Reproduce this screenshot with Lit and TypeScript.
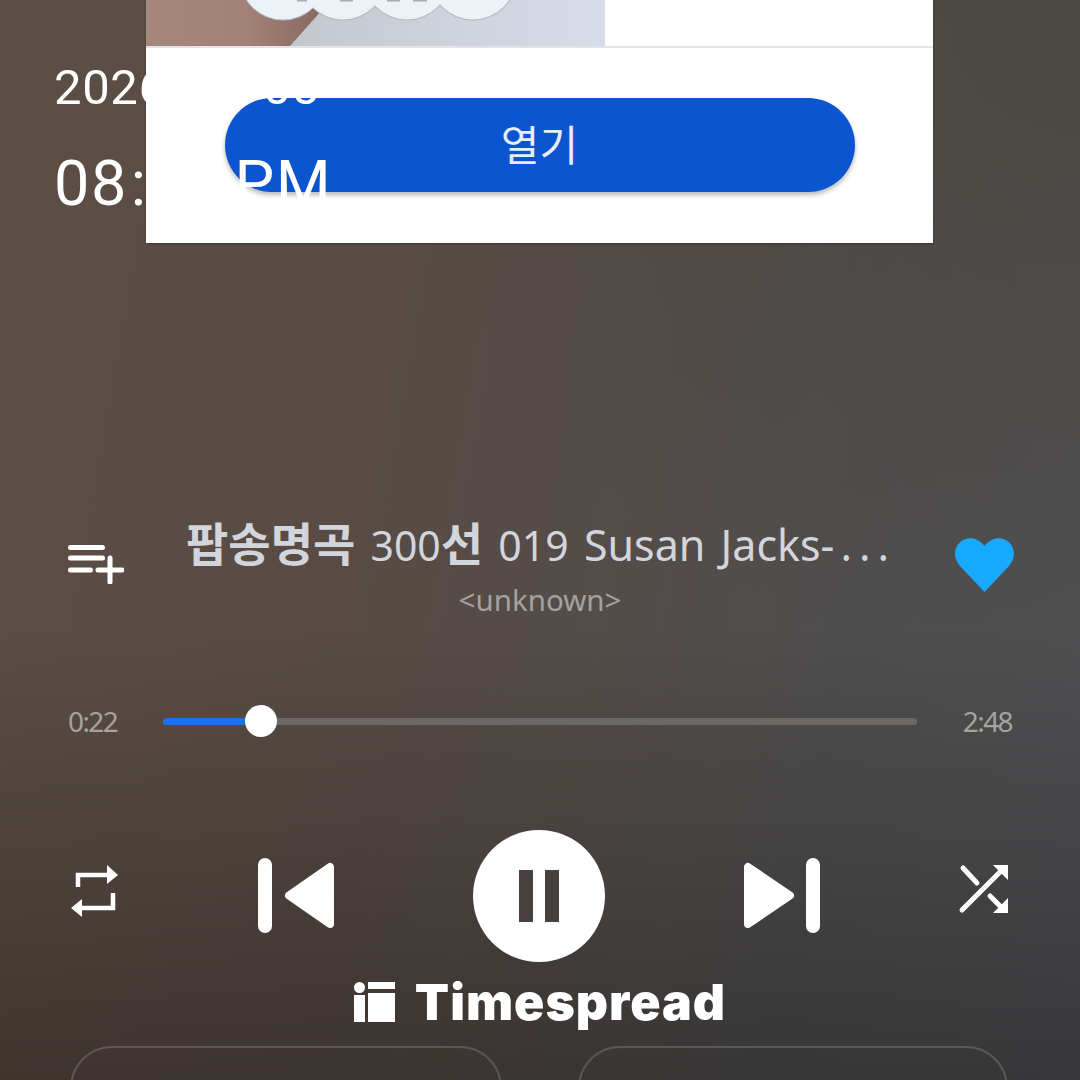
import { css, html, LitElement, svg } from "lit";
import { customElement } from "lit/decorators.js";

const BUMPS = [137, 197, 261, 327];
const MARKS = [
  [151, 10],
  [194, 13],
  [241, 13],
  [267, 14],
];
const PROGRESS = (98 / 754) * 100;

@customElement("ad-card")
export class AdCard extends LitElement {
  static styles = css`
    :host {
      position: absolute;
      top: 0;
      left: 146px;
      width: 787px;
      height: 243px;
      background: #fff;
      box-shadow: 0 1px 2px rgba(0, 0, 0, 0.3);
      display: flex;
      flex-direction: column;
      align-items: center;
    }
    .media {
      width: 100%;
      height: 46px;
      flex: none;
      border-bottom: 2px solid #e4e4e6;
    }
    .media svg {
      display: block;
    }
    .open {
      margin-top: 50px;
      width: 630px;
      height: 94px;
      border-radius: 47px;
      background: #0d55d0;
      box-shadow: 0 3px 5px rgba(0, 0, 0, 0.28);
      color: #e6edf9;
      font: 400 42px / 90px "Noto Sans CJK KR", "Noto Sans", sans-serif;
      text-align: center;
    }
  `;

  render() {
    return html`
      <div class="media">
        <svg width="787" height="46" viewBox="0 0 787 46">
          <defs>
            <linearGradient id="skin" x1="0" x2="1" y1="0" y2="0">
              <stop offset="0" stop-color="#a6877c" />
              <stop offset="0.55" stop-color="#a28277" />
              <stop offset="1" stop-color="#85665d" />
            </linearGradient>
            <linearGradient id="cloth" x1="0" x2="1" y1="0" y2="0">
              <stop offset="0" stop-color="#b4b5b9" />
              <stop offset="0.4" stop-color="#c6cad2" />
              <stop offset="1" stop-color="#d6dde9" />
            </linearGradient>
          </defs>
          <rect width="459" height="46" fill="url(#cloth)" />
          <polygon points="0,0 185,0 144,46 0,46" fill="url(#skin)" />
          ${BUMPS.map(
            (x) => svg`<circle cx=${x} cy="-23.500" r="44" fill="#b4b6b8" />`
          )}
          ${BUMPS.map(
            (x) => svg`<circle cx=${x} cy="-23.500" r="43" fill="#ebf3f9" />`
          )}
          ${MARKS.map(
            ([x, w]) => svg`<rect x=${x} y="0" width=${w} height="1.500" fill="#a9abad" />`
          )}
        </svg>
      </div>
      <div class="open">열기</div>
    `;
  }
}

@customElement("app-root")
export class AppRoot extends LitElement {
  static styles = css`
    :host {
      display: block;
      width: 1080px;
      height: 1080px;
    }
    .page {
      position: relative;
      width: 1080px;
      height: 1080px;
      overflow: hidden;
      display: flex;
      flex-direction: column;
      font-family: Roboto, "Noto Sans CJK KR", sans-serif;
      color: #fff;
      background: linear-gradient(
          180deg,
          rgba(0, 0, 0, 0) 0%,
          rgba(0, 0, 0, 0) 58%,
          rgba(0, 0, 0, 0.31) 100%
        ),
        radial-gradient(
          circle at 100% 0%,
          rgba(74, 68, 60, 0.75) 0%,
          rgba(74, 68, 60, 0) 45%
        ),
        linear-gradient(100deg, #5c4e44 0%, #574b45 40%, #4f4e4e 75%, #4f5053 100%);
    }
    .page > * {
      flex: none;
    }
    .clock {
      position: relative;
      z-index: 2;
      height: 232px;
      padding: 60px 0 0 54px;
      box-sizing: border-box;
    }
    .date {
      font-size: 49px;
      line-height: 56px;
      letter-spacing: 0.6px;
    }
    .date span {
      margin: 0 3px;
    }
    .time {
      margin-top: 32px;
      font-size: 63px;
      line-height: 72px;
      letter-spacing: 1.5px;
      word-spacing: -10px;
    }
    .time span {
      margin: 0 6px 0 3px;
    }
    .track {
      margin-top: 280px;
      display: grid;
      grid-template-columns: 68px 56px 62px 716px 53px 59px;
      grid-template-rows: 66px;
      align-items: center;
    }
    .queue {
      grid-column: 2;
      display: block;
      margin-top: 38px;
    }
    .title {
      grid-column: 4;
      margin-bottom: 5px;
      font-family: "Noto Sans", "Noto Sans CJK KR", sans-serif;
      font-weight: 400;
      font-size: 43px;
      line-height: 60px;
      color: #d2d5db;
      white-space: nowrap;
      word-spacing: 4px;
    }
    .title b {
      font-family: "Noto Sans CJK KR", sans-serif;
      font-weight: 700;
      font-size: 46px;
    }
    .title .num {
      font-size: 41px;
    }
    .title .more {
      letter-spacing: 7px;
      margin-left: 6px;
    }
    .heart {
      grid-column: 6;
      display: block;
      margin-top: 40px;
    }
    .artist {
      margin-top: 4px;
      text-align: center;
      font-family: "Noto Sans", sans-serif;
      font-weight: 400;
      font-size: 29.500px;
      line-height: 36px;
      color: #a5a19e;
    }
    .progress {
      margin-top: 83px;
      padding: 0 68px;
      display: flex;
      align-items: center;
      height: 40px;
      font-family: "Noto Sans", sans-serif;
      font-size: 28px;
      line-height: 38px;
      letter-spacing: -1.6px;
      color: #a6a29e;
    }
    .elapsed,
    .total {
      width: 95px;
      flex: none;
    }
    .total {
      text-align: right;
    }
    .bar {
      flex: 1;
      position: relative;
      height: 7px;
      border-radius: 4px;
      background: #6b6866;
    }
    .fill {
      height: 100%;
      border-radius: 4px;
      background: #1a73e4;
    }
    .thumb {
      position: absolute;
      top: 50%;
      width: 32px;
      height: 32px;
      border-radius: 50%;
      background: #fff;
      transform: translate(-50%, -50%);
    }
    .controls {
      margin-top: 89px;
      padding-left: 60px;
      display: grid;
      grid-template-columns: 198px 215px 271px 200px 70px;
      align-items: center;
      height: 132px;
    }
    .controls svg {
      display: block;
    }
    .pause {
      width: 132px;
      height: 132px;
      border-radius: 50%;
      background: #fff;
      display: flex;
      align-items: center;
      justify-content: center;
      gap: 12px;
    }
    .pause i {
      width: 14px;
      height: 52px;
      background: #46413f;
    }
    .brand {
      margin-top: 18px;
      display: flex;
      justify-content: center;
      align-items: flex-start;
      gap: 19px;
      height: 48px;
      font-family: Inter, sans-serif;
      font-weight: 900;
      font-size: 50px;
      line-height: 44px;
      letter-spacing: 1px;
    }
    .brand svg {
      display: block;
      flex: none;
      margin-top: 2px;
    }
    .actions {
      margin-top: 18px;
      padding: 0 72px 0 70px;
      display: grid;
      grid-template-columns: 432px 430px;
      justify-content: space-between;
    }
    .actions div {
      height: 80px;
      border: 2px solid rgba(255, 255, 255, 0.17);
      border-radius: 50px;
    }
  `;

  render() {
    return html`
      <div class="page">
        <ad-card></ad-card>
        <div class="clock">
          <div class="date">2026<span>-</span>01<span>-</span>05</div>
          <div class="time">08<span>:</span>30 PM</div>
        </div>

        <div class="track">
          <svg class="queue" width="56" height="40" viewBox="0 0 56 40" fill="none" stroke="#fff" stroke-width="5" stroke-linecap="round">
            <path d="M2.500 3.500h32M2.500 14h32M2.500 26h20M30 26h24M42 14v24" />
          </svg>
          <div class="title"><b>팝송명곡</b> <span class="num">300</span><b>선</b> <span class="num">019</span> Susan Jacks-<span class="more">...</span></div>
          <svg class="heart" width="59" height="54" viewBox="0 0 59 54">
            <path fill="#18aaff" d="M29.500 54 5 28C-1.800 20.600-1.400 9.800 5 4.200 12-1.800 22.500-.9 29.500 8 36.500-.9 47-1.800 54 4.200 60.400 9.800 60.800 20.600 54 28Z" />
          </svg>
        </div>
        <div class="artist">&lt;unknown&gt;</div>

        <div class="progress">
          <span class="elapsed">0:22</span>
          <div class="bar">
            <div class="fill" style="width: ${PROGRESS}%"></div>
            <div class="thumb" style="left: ${PROGRESS}%"></div>
          </div>
          <span class="total">2:48</span>
        </div>

        <div class="controls">
          <svg width="70" height="70" viewBox="0 0 70 70" fill="none" stroke="#fff" stroke-width="4.500">
            <path d="M18 26V14h32M53 32V47H20" />
            <path fill="#fff" stroke="none" d="M47 4l11 10-11 9zM22 38 11 47l11 9z" />
          </svg>
          <svg width="76" height="76" viewBox="0 0 76 76" fill="#fff">
            <rect x="0" y="0" width="14" height="75" rx="7" />
            <path stroke="#fff" stroke-width="8" stroke-linejoin="round" d="M31 37.500 72 9v57z" />
          </svg>
          <div class="pause"><i></i><i></i></div>
          <svg width="76" height="76" viewBox="0 0 76 76" fill="#fff">
            <rect x="62" y="0" width="14" height="75" rx="7" />
            <path stroke="#fff" stroke-width="8" stroke-linejoin="round" d="M46 37.500 4 9v57z" />
          </svg>
          <svg width="70" height="70" viewBox="0 0 70 70" fill="none" stroke="#fff" stroke-width="5" stroke-linecap="round">
            <path d="M19 7l14 15M18 49l38-38M46 35l10 10" />
            <path fill="#fff" stroke="none" d="M49 4h15v15zM64 52H49l15-15z" />
          </svg>
        </div>

        <div class="brand">
          <svg width="42" height="40" viewBox="0 0 42 40" fill="#fff">
            <circle cx="5.500" cy="5.500" r="5.500" />
            <rect x="0" y="13" width="11" height="27" />
            <rect x="14" y="0" width="27" height="7" />
            <rect x="14" y="11" width="27" height="29" />
          </svg>
          <span>Timespread</span>
        </div>

        <div class="actions"><div></div><div></div></div>
      </div>
    `;
  }
}
